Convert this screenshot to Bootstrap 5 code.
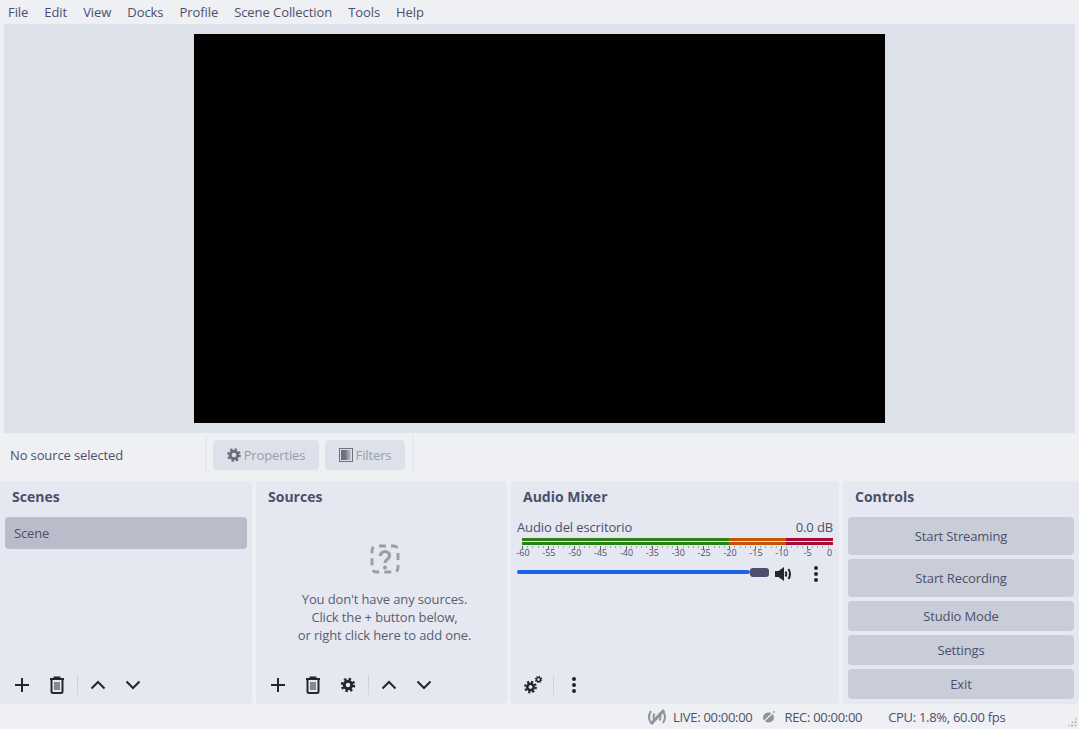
<!DOCTYPE html>
<html lang="en">
<head>
<meta charset="utf-8">
<title>OBS</title>
<link href="https://cdn.jsdelivr.net/npm/bootstrap@5.3.0/dist/css/bootstrap.min.css" rel="stylesheet">
<style>
html,body{height:729px;overflow:hidden}
body{background:#eff0f4;font-family:"Open Sans",sans-serif;font-size:13px;line-height:18px;color:#4c4f6b;letter-spacing:-.13px}
.shell{height:729px;width:1079px}
.menubar{height:24px;padding-left:8px;gap:16px;align-items:center;letter-spacing:-.07px}
.stage{height:409px;margin:0 4px;background:#dde1e9;padding:10px 190px}
.screen{height:389px;background:#000}
.tools{height:44px;padding:7px 0 7px 10px}
.nosel{width:195px}
.vsep{width:2px;height:36px;background:#e6e8ee;margin-top:-3px}
.propbtn{height:30px;background:#dde1e9;color:#9a9ca9;border-radius:4px;gap:3px;justify-content:center}
.pb1{width:106px;margin:0 6px}
.pb2{width:80px;margin-right:7px}
.docks{height:223px;margin-top:4px;gap:4px}
.dock{background:#e5e8f0;border-radius:4px;height:223px}
.dk1{width:252px}.dk2{width:251px}.dk3{width:328px}.dk4{width:236px}
.dtitle{height:36px;padding:7px 12px 0;font-weight:700;font-size:14px;color:#4c4f6b;line-height:18px;letter-spacing:0}
.sceneitem{margin:0 5px;height:32px;background:#babdc9;border-radius:4px;padding:0 9px;line-height:32px}
.dfoot{height:38px;padding-left:12px}
.ico{width:20px;height:20px;color:#24262e;flex:none}
.g15{margin-left:15px}
.g21{margin-left:21px}
.hsep{width:1px;height:20px;background:#d0d3dc;margin:0 10px}
.empty{height:152px;padding:27px 0 0 6px;color:#5a5d73;line-height:18px}
.qmark{margin-bottom:16px;display:block}
.mix{padding:0 6px}
.mixhead{height:20px;line-height:20px;margin-bottom:1px}
.meter{margin:0 0 0 5px;width:311px}
.mbar{height:3px;margin-bottom:1px;background:linear-gradient(90deg,#2b8113 0,#2b8113 207px,#c95305 207px,#c95305 264px,#a90a35 264px)}
.tickrow{height:3px;background:repeating-linear-gradient(90deg,#5d6076 0,#5d6076 1px,transparent 1px,transparent 25.9px) 0 0/100% 3px no-repeat,repeating-linear-gradient(90deg,#a2a5b3 0,#a2a5b3 1px,transparent 1px,transparent 5.18px) 0 0/100% 2px no-repeat}
.scale{font-size:9px;line-height:10px;color:#4c4f6b;margin:-1px 0 0 -7px;letter-spacing:0}
.scale span{width:25.9px;flex:none;text-align:center;display:block}
.scale span:last-child{padding-right:8px}
.fader{height:20px;margin-top:6px;align-items:center}
.ftrack{width:233px;height:4px;background:#1d63e8;border-radius:2px;margin-top:-4px}
.fknob{width:19px;height:9px;background:#4c4f6b;border-radius:3px;margin:-4px 6px 0 0}
.ctrls{padding:0 5px;gap:4px}
.cbtn{background:#c9cdd8;border-radius:4px;color:#4c4f6b;display:flex;align-items:center;justify-content:center;height:30px}
.cbtn.tall{height:38px}
.statusb{height:25px;color:#4c4f6b;position:relative;letter-spacing:-.3px}
.s1{margin-left:647px}.s2{margin-left:6px}.s3{margin-left:10px}.s4{margin-left:8px}.s5{margin-left:26px}
.grip{position:absolute;right:2px;bottom:2px;width:10px;height:10px;background:radial-gradient(circle,#a7a9b5 1px,transparent 1.2px) 0 0/3.4px 3.4px;clip-path:polygon(100% 0,100% 100%,0 100%)}
</style>
</head>
<body>
<div class="shell d-flex flex-column">
  <div class="menubar d-flex"><span>File</span><span>Edit</span><span>View</span><span>Docks</span><span>Profile</span><span>Scene Collection</span><span>Tools</span><span>Help</span></div>
  <div class="stage"><div class="screen"></div></div>
  <div class="tools d-flex align-items-center">
    <div class="nosel">No source selected</div>
    <div class="vsep"></div>
    <div class="propbtn pb1 d-flex align-items-center">
      <svg width="14" height="14" viewBox="-12 -12 24 24" fill="none" stroke="#6d6f7b"><circle r="6.500" stroke-width="5"/><circle r="9.800" stroke-width="4" stroke-dasharray="3.850 3.850"/></svg>
      <span>Properties</span>
    </div>
    <div class="propbtn pb2 d-flex align-items-center">
      <svg width="14" height="14" viewBox="0 0 14 14"><defs><linearGradient id="fg"><stop offset=".4" stop-color="#6d6f7b"/><stop offset="1" stop-color="#c4c6cf"/></linearGradient></defs><rect x=".5" y=".5" width="13" height="13" fill="none" stroke="#6d6f7b"/><rect x="2" y="2" width="10" height="10" fill="url(#fg)"/></svg>
      <span>Filters</span>
    </div>
    <div class="vsep"></div>
  </div>
  <div class="docks d-flex">
    <div class="dock dk1 d-flex flex-column">
      <div class="dtitle">Scenes</div>
      <div class="sceneitem">Scene</div>
      <div class="flex-grow-1"></div>
      <div class="dfoot d-flex align-items-center">
        <svg class="ico" viewBox="0 0 20 20"><path d="M10 3v14M3 10h14" stroke="currentColor" stroke-width="2" fill="none"/></svg>
        <svg class="ico g15" viewBox="0 0 20 20" fill="none" stroke="currentColor" stroke-width="2"><path d="M3 4h14M7.500 4V2.500h5V4M4.500 5v11.500q0 1.500 1.500 1.500h8q1.500 0 1.500-1.500V5"/><path d="M8 7v8M10 7v8M12 7v8" stroke-width="1"/></svg>
        <div class="hsep"></div>
        <svg class="ico" viewBox="0 0 20 20" fill="none" stroke="currentColor" stroke-width="2"><path d="M3.500 13.500 10 7l6.500 6.500"/></svg>
        <svg class="ico g15" viewBox="0 0 20 20" fill="none" stroke="currentColor" stroke-width="2"><path d="M3.500 6.500 10 13l6.500-6.500"/></svg>
      </div>
    </div>
    <div class="dock dk2 d-flex flex-column">
      <div class="dtitle">Sources</div>
      <div class="empty text-center">
        <svg class="qmark mx-auto" width="30" height="30" viewBox="0 0 30 30" fill="none" stroke="#9a9ca6" stroke-width="2.800"><rect x="2" y="2" width="26" height="26" rx="4" stroke-dasharray="7 5" stroke-dashoffset="-3"/><path d="M10.500 12c0-6 9-6 9 0 0 3.500-4.500 3-4.500 7" stroke-width="3.200"/><circle cx="15" cy="23.500" r="2" fill="#9a9ca6" stroke="none"/></svg>
        You don't have any sources.<br>Click the + button below,<br>or right click here to add one.
      </div>
      <div class="flex-grow-1"></div>
      <div class="dfoot d-flex align-items-center">
        <svg class="ico" viewBox="0 0 20 20"><path d="M10 3v14M3 10h14" stroke="currentColor" stroke-width="2" fill="none"/></svg>
        <svg class="ico g15" viewBox="0 0 20 20" fill="none" stroke="currentColor" stroke-width="2"><path d="M3 4h14M7.500 4V2.500h5V4M4.500 5v11.500q0 1.500 1.500 1.500h8q1.500 0 1.500-1.500V5"/><path d="M8 7v8M10 7v8M12 7v8" stroke-width="1"/></svg>
        <svg class="ico g15" viewBox="-20 -20 40 40" fill="none" stroke="currentColor"><circle r="7.500" stroke-width="6"/><circle r="12" stroke-width="5" stroke-dasharray="4.710 4.710"/></svg>
        <div class="hsep"></div>
        <svg class="ico" viewBox="0 0 20 20" fill="none" stroke="currentColor" stroke-width="2"><path d="M3.500 13.500 10 7l6.500 6.500"/></svg>
        <svg class="ico g15" viewBox="0 0 20 20" fill="none" stroke="currentColor" stroke-width="2"><path d="M3.500 6.500 10 13l6.500-6.500"/></svg>
      </div>
    </div>
    <div class="dock dk3 d-flex flex-column">
      <div class="dtitle">Audio Mixer</div>
      <div class="mix">
        <div class="mixhead d-flex justify-content-between"><span>Audio del escritorio</span><span>0.0 dB</span></div>
        <div class="meter"><div class="mbar"></div><div class="mbar"></div><div class="tickrow"></div></div>
        <div class="scale d-flex"><span>-60</span><span>-55</span><span>-50</span><span>-45</span><span>-40</span><span>-35</span><span>-30</span><span>-25</span><span>-20</span><span>-15</span><span>-10</span><span>-5</span><span>0</span></div>
        <div class="fader d-flex">
          <div class="ftrack"></div><div class="fknob"></div>
          <svg width="17" height="16" viewBox="0 0 17 16" fill="none" stroke="#24262e" stroke-width="2"><path d="M0 5h3.500L9 1v14l-5.500-4H0z" fill="#24262e" stroke="none"/><path d="M10.500 5.500q1.500 2.500 0 5M13.500 3q3 5 0 10"/></svg>
          <svg class="g21" width="6" height="18" viewBox="0 0 6 18" fill="#24262e"><circle cx="3" cy="3" r="2"/><circle cx="3" cy="9" r="2"/><circle cx="3" cy="15" r="2"/></svg>
        </div>
      </div>
      <div class="flex-grow-1"></div>
      <div class="dfoot d-flex align-items-center">
        <svg class="ico" viewBox="0 0 20 20" fill="none" stroke="currentColor"><g transform="translate(7.500 12)"><circle r="3.200" stroke-width="2.600"/><circle r="5.300" stroke-width="2.200" stroke-dasharray="2.080 2.080"/></g><g transform="translate(15.500 4.500)"><circle r="2" stroke-width="1.400"/><circle r="3.100" stroke-width="1.200" stroke-dasharray="1.200 1.240"/></g></svg>
        <div class="hsep"></div>
        <svg class="ico" viewBox="0 0 20 20" fill="#24262e"><circle cx="10" cy="4" r="2"/><circle cx="10" cy="10" r="2"/><circle cx="10" cy="16" r="2"/></svg>
      </div>
    </div>
    <div class="dock dk4 d-flex flex-column">
      <div class="dtitle">Controls</div>
      <div class="ctrls d-flex flex-column">
        <div class="cbtn tall">Start Streaming</div>
        <div class="cbtn tall">Start Recording</div>
        <div class="cbtn">Studio Mode</div>
        <div class="cbtn">Settings</div>
        <div class="cbtn">Exit</div>
      </div>
    </div>
  </div>
  <div class="statusb d-flex align-items-center">
    <svg class="s1" width="20" height="16" viewBox="0 0 20 16" fill="none" stroke="#8f919b" stroke-width="2"><path d="M4 2Q0 8 4 14M7.500 4.500Q5.500 8 7.500 11.500M16 2q4 6 0 12M12.500 4.500q2 3.500 0 7"/><path d="M4 15 17 1" stroke-width="3"/></svg>
    <span class="s2">LIVE: 00:00:00</span>
    <svg class="s3" width="14" height="14" viewBox="0 0 14 14"><ellipse cx="6.500" cy="7.500" rx="5.500" ry="5" fill="#8f919b"/><path d="M0 13 13 1" stroke="#eff0f4" stroke-width="1.200"/><path d="M11 1.500 13 1 12 4z" fill="#8f919b"/></svg>
    <span class="s4">REC: 00:00:00</span>
    <span class="s5">CPU: 1.8%, 60.00 fps</span>
    <div class="grip"></div>
  </div>
</div>
<script src="https://cdn.jsdelivr.net/npm/bootstrap@5.3.0/dist/js/bootstrap.bundle.min.js"></script>
</body>
</html>
